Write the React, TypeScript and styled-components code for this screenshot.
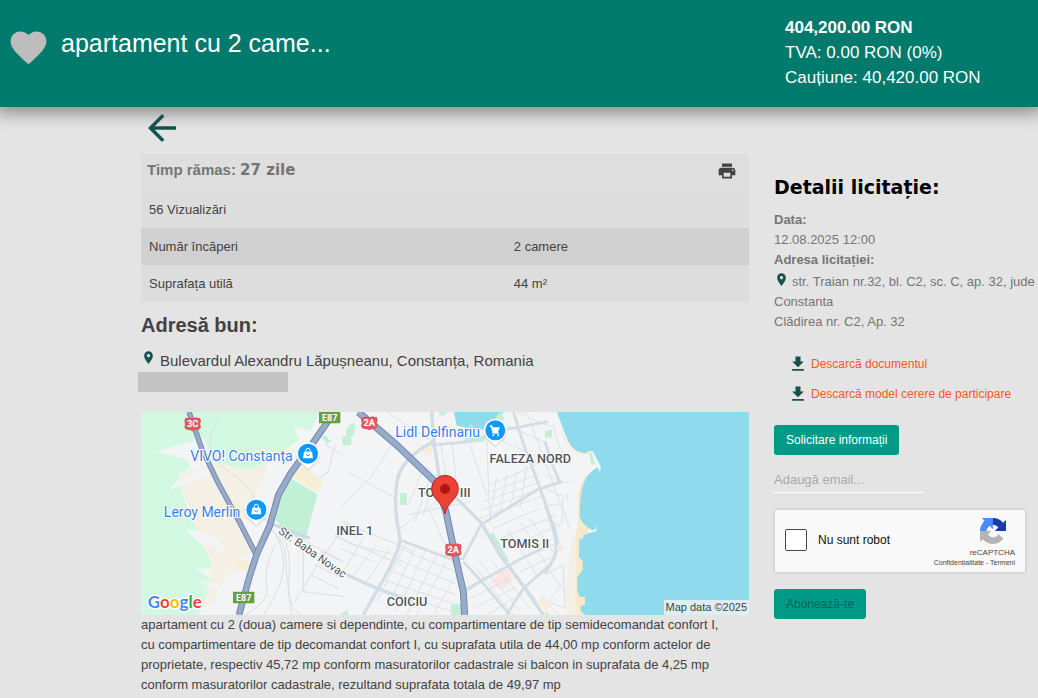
import React from "react";
import styled, { createGlobalStyle } from "styled-components";

const teal = "#007a6c";
const darkTeal = "#14524c";

const GlobalStyle = createGlobalStyle`
  *, *::before, *::after { box-sizing: border-box; }
  html, body { margin: 0; background: #e4e4e4; overflow-x: hidden; }
  body { font-family: "Liberation Sans", Arial, sans-serif; font-size: 13px; color: #424242; overflow-y: hidden; }
  h1, h2, p { margin: 0; }
  button, input { font-family: inherit; }
`;

const Header = styled.header`
  display: grid;
  grid-template-columns: minmax(0, 1fr) 253px;
  height: 107px;
  background: ${teal};
  color: #fff;
  box-shadow: 0 2px 16px 4px rgba(0, 0, 0, 0.4);
`;

const TitleGroup = styled.div`
  display: flex;
  align-items: flex-start;
  gap: 11px;
  padding: 26px 0 0 7px;
`;

const IconButton = styled.button<{ $color: string }>`
  display: flex;
  padding: 0;
  border: 0;
  background: none;
  color: ${(p) => p.$color};
  cursor: pointer;
`;

const Title = styled.h1`
  font-size: 25px;
  font-weight: 400;
  line-height: 34px;
  white-space: nowrap;
`;

const Prices = styled.div`
  padding-top: 15px;
  font-size: 17px;
  line-height: 25px;
`;

const Content = styled.main`
  display: grid;
  grid-template-columns: minmax(0, 1fr) 264px;
  gap: 25px;
  padding-left: 141px;
`;

const BackLink = styled.a`
  display: flex;
  align-items: flex-start;
  width: 42px;
  height: 47px;
  color: ${darkTeal};
`;

const SummaryBar = styled.div`
  display: flex;
  justify-content: space-between;
  align-items: flex-start;
  height: 37px;
  padding: 7px 12px 0 6px;
  background: #dedede;
  color: #757575;
  font-size: 15px;
  font-weight: 700;
  line-height: 18px;
`;

const Heavy = styled.span`
  font-family: "DejaVu Sans", "Liberation Sans", sans-serif;
`;

const Facts = styled.table`
  width: 100%;
  border-collapse: collapse;
  table-layout: fixed;
  background: #dddddd;

  tr:nth-child(2) { background: #d0d0d0; }
  th, td {
    height: 37px;
    padding: 0 8px;
    font-weight: 400;
    text-align: left;
  }
  th { width: 60%; }
`;

const SectionTitle = styled.h2`
  padding-top: 10px;
  font-size: 20px;
  line-height: 26px;
`;

const Address = styled.p`
  display: flex;
  gap: 4px;
  padding-top: 12px;
  font-size: 15px;
  line-height: 22px;
`;

const Placeholder = styled.div`
  width: 150px;
  height: 20px;
  margin: 0 0 20px -3px;
  background: #c3c3c3;
`;

const MapSvg = styled.svg`
  display: block;
  width: 100%;
  height: auto;
  font-family: Roboto, sans-serif;
`;

const Description = styled.p`
  padding-right: 20px;
  line-height: 20px;
`;

const Sidebar = styled.aside`
  padding-top: 67px;
  color: #757575;
`;

const SidebarTitle = styled.h2`
  padding-bottom: 10px;
  color: #000;
  font-family: "DejaVu Sans", "Liberation Sans", sans-serif;
  font-size: 19px;
  font-weight: 700;
  line-height: 26px;
`;

const Line = styled.p`
  line-height: 20px;
  white-space: nowrap;
`;

const PinLine = styled(Line)`
  display: flex;
  gap: 3px;
  padding-top: 2px;
`;

const Downloads = styled.div`
  display: flex;
  flex-direction: column;
  gap: 10px;
  padding: 22px 0 21px 14px;
`;

const DownloadLink = styled.a`
  display: flex;
  align-items: center;
  gap: 3px;
  height: 20px;
  color: #ff5722;
  font-size: 12px;
  text-decoration: none;
  white-space: nowrap;

  svg { color: ${darkTeal}; }
`;

const Button = styled.button`
  display: block;
  height: 30px;
  padding: 0 12px;
  border: 0;
  border-radius: 3px;
  background: #009a89;
  color: #fff;
  font-size: 12px;
  cursor: pointer;

  &:disabled { color: #00665c; cursor: default; }
`;

const EmailInput = styled.input`
  display: block;
  width: 150px;
  height: 26px;
  margin: 12px 0 16px;
  padding: 0;
  border: 0;
  border-bottom: 1px solid #fff;
  background: none;
  font-size: 13px;
  outline: 0;

  &::placeholder { color: #a9a9a9; opacity: 1; }
`;

const Captcha = styled.div`
  display: flex;
  justify-content: space-between;
  width: 252px;
  height: 64px;
  margin-bottom: 16px;
  padding: 0 10px;
  border: 1px solid #d3d3d3;
  border-radius: 2px;
  background: #f9f9f9;
  color: #111;
  box-shadow: 0 0 3px rgba(0, 0, 0, 0.1);
`;

const CaptchaLabel = styled.label`
  display: flex;
  align-items: center;
  gap: 11px;
  height: 60px;
  font-size: 12px;
  white-space: nowrap;
`;

const CaptchaBox = styled.input`
  appearance: none;
  width: 22px;
  height: 22px;
  margin: 0;
  border: 1px solid #444;
  border-radius: 2px;
  background: #fff;
`;

const CaptchaBrand = styled.div`
  display: flex;
  flex-direction: column;
  align-items: flex-end;
  padding-top: 8px;
  color: #444;
  font-size: 8px;
  line-height: 10px;

  svg { margin: 0 9px 4px 0; }
`;

const CaptchaTerms = styled.div`
  font-size: 7px;
  line-height: 9px;
  white-space: nowrap;
  a { color: inherit; text-decoration: none; }
`;

const PinWrap = styled.span`
  display: flex;
  color: ${darkTeal};
`;

const paths = {
  heart:
    "M12 21.35l-1.45-1.32C5.4 15.36 2 12.28 2 8.5 2 5.42 4.42 3 7.5 3c1.74 0 3.41.81 4.5 2.09C13.09 3.81 14.76 3 16.5 3 19.58 3 22 5.42 22 8.5c0 3.78-3.4 6.86-8.55 11.54L12 21.35z",
  back: "M20 11H7.83l5.59-5.59L12 4l-8 8 8 8 1.41-1.41L7.83 13H20v-2z",
  print:
    "M19 8H5c-1.66 0-3 1.34-3 3v6h4v4h12v-4h4v-6c0-1.66-1.34-3-3-3zm-3 11H8v-5h8v5zm3-7c-.55 0-1-.45-1-1s.45-1 1-1 1 .45 1 1-.45 1-1 1zm-1-9H6v4h12V3z",
  place:
    "M12 2C8.13 2 5 5.13 5 9c0 5.25 7 13 7 13s7-7.75 7-13c0-3.87-3.13-7-7-7zm0 9.5c-1.38 0-2.5-1.12-2.5-2.5s1.12-2.5 2.5-2.5 2.5 1.12 2.5 2.5-1.12 2.5-2.5 2.5z",
  download: "M19 9h-4V3H9v6H5l7 7 7-7zM5 18v2h14v-2H5z",
};

function Icon({ name, size }: { name: keyof typeof paths; size: number }) {
  return (
    <svg width={size} height={size} viewBox="0 0 24 24" fill="currentColor" aria-hidden="true">
      <path d={paths[name]} />
    </svg>
  );
}

function Pin() {
  return (
    <PinWrap>
      <Icon name="place" size={15} />
    </PinWrap>
  );
}

function RecaptchaLogo() {
  return (
    <svg width="26" height="26" viewBox="0 0 64 64" aria-hidden="true">
      <path fill="#1c3aa9" d="M64 31.955l-.033-1.37V4.687l-7.16 7.16C50.948 4.674 42.033.093 32.05.093c-10.4 0-19.622 4.96-25.458 12.64l11.736 11.86a15.55 15.55 0 0 1 4.754-5.334c2.05-1.6 4.952-2.906 8.968-2.906.485 0 .86.057 1.135.163 4.976.393 9.288 3.14 11.828 7.124l-8.307 8.307L64 31.953" />
      <path fill="#4b8df8" d="M31.862.094l-1.37.033H4.594l7.16 7.16C4.58 13.147 0 22.06 0 32.046c0 10.4 4.96 19.622 12.64 25.458L24.5 45.768a15.55 15.55 0 0 1-5.334-4.754c-1.6-2.05-2.906-4.952-2.906-8.968 0-.485.057-.86.163-1.135.393-4.976 3.14-9.288 7.124-11.828l8.307 8.307L31.86.095" />
      <path fill="#b4b4b4" d="M.001 32.045l.033 1.37v25.898l7.16-7.16c5.86 7.173 14.774 11.754 24.76 11.754 10.4 0 19.622-4.96 25.458-12.64l-11.736-11.86a15.55 15.55 0 0 1-4.754 5.334c-2.05 1.6-4.952 2.906-8.968 2.906-.485 0-.86-.057-1.135-.163-4.976-.393-9.288-3.14-11.828-7.124l8.307-8.307c-10.522.04-22.4.066-27.295-.005" />
    </svg>
  );
}

function Highway({ d, w }: { d: string; w: number }) {
  return (
    <g fill="none" strokeLinejoin="round">
      <path d={d} stroke="#7189b2" strokeWidth={w} />
      <path d={d} stroke="#98abc9" strokeWidth={w - 6} />
    </g>
  );
}

function Shield({ x, y, label }: { x: number; y: number; label: string }) {
  return (
    <g transform={`translate(${x} ${y})`}>
      <path d="M-22-19q6 3 11-1 11 4 22 0 5 4 11 1l3 10q-5 9 0 18-3 10-14 9-6 1-11 4-5-3-11-4-11 1-14-9 5-9 0-18z" fill="#dd5a62" />
      <text y="9" textAnchor="middle" fontSize="28" fontWeight="700" fill="#fff">{label}</text>
    </g>
  );
}

function EuroBadge({ x, y }: { x: number; y: number }) {
  return (
    <g transform={`translate(${x} ${y})`}>
      <rect x="-32" y="-18" width="64" height="35" rx="2" fill="#689f3f" />
      <text y="9" textAnchor="middle" fontSize="27" fontWeight="700" fill="#fff">E87</text>
    </g>
  );
}

function ShopPin({ x, y, cart }: { x: number; y: number; cart?: boolean }) {
  return (
    <g transform={`translate(${x} ${y})`}>
      <path d="M-36 0a36 36 0 1 1 72 0c0 17-10 26-20 33L0 48l-16-15C-26 26-36 17-36 0z" fill="#9aa8b5" opacity=".35" transform="translate(0 3)" />
      <path d="M-35 0a35 35 0 1 1 70 0c0 17-10 25-20 32L0 46l-15-14C-25 25-35 17-35 0z" fill="#fff" />
      <circle r="30" fill="#0b99fb" />
      {cart ? (
        <g fill="#fff">
          <path d="M-17-15h7l3 6h21l-7 16H-8L-14-11h-3z" />
          <path d="M-9 6h20v4H-9z" />
          <circle cx="-6" cy="15" r="3" />
          <circle cx="8" cy="15" r="3" />
        </g>
      ) : (
        <g>
          <path d="M-12-6h24l3 20h-30z" fill="#fff" />
          <path d="M-6-5v-5q0-6 6-6t6 6v5" fill="none" stroke="#fff" strokeWidth="3" />
          <path d="M-6 2q6 9 12 0" fill="none" stroke="#0b99fb" strokeWidth="3" />
        </g>
      )}
    </g>
  );
}

function LocationMap() {
  return (
    <MapSvg viewBox="0 0 1824 609" role="img" aria-label="Harta">
      <rect width="1824" height="609" fill="#f3f4f5" />

      {/* western parks, retail zones and streets */}
      <g transform="translate(-18 -21)">
        <path fill="#d3f8e2" d="M18 21H553L528 78 475 64 492 105 455 130 400 170 340 195 240 172 205 100 65 140 150 160 165 185 100 255 135 240 165 330 190 378 150 372 205 425 230 465 228 492 180 490 228 520 220 550 195 528 222 560 190 630H18z" />
        <path fill="#f5f0e5" d="M130 205 240 175 340 195 400 170 385 230 350 290 325 350 340 400 350 440 300 475 340 490 275 510 235 600 205 610 190 630 225 550 228 470 190 378 150 270z" />
        <path fill="#f3f4f5" d="M65 140 200 100 225 175 180 160zM100 255 200 188 240 205zM150 372 250 398 268 448zM180 495 250 500 290 515 240 500zM192 527 240 535 275 550 268 560z" />
        <path fill="#f8edd5" d="M480 185 515 190 563 230 550 262 470 215zM295 475 310 462 350 475 335 497z" />
        <path fill="#c2f0d5" d="M464 218 548 268 510 405 462 390 422 345 430 280z" />
        <path fill="#c2f0d5" d="M560 98l10-8 17 17-10 9zM622 94h27v27h-27zM633 76q12-26 28-19l-4 34q-14 8-24 0zM614 630l25-17v17z" />
        <g fill="none" stroke="#d8dfe6" strokeWidth="3">
          <path d="M262 21Q222 80 224 120T270 190T340 250T350 280M350 320L420 360L625 470M600 120L580 200L556 218M570 118L622 150" />
          <path d="M400 370Q450 400 452 460T470 630M410 375Q440 400 445 470T385 630M440 390Q470 430 462 520T500 630M420 420Q385 490 395 540T330 630M505 440V560L630 575M480 590L540 490L640 350M530 510L610 550M540 480L625 520M560 440L625 470M595 390L800 480M620 350L840 440" />
          <path d="M405 355L525 400" stroke="#cbd6df" strokeWidth="8" />
        </g>
        <Highway d="M162 21 200 130 250 235 310 345 363 448" w={16} />
        <Highway d="M598 21 540 105 465 208 430 270 405 360 365 448 342 520 312 630" w={20} />
      </g>

      {/* centre and residential grid */}
      <g transform="translate(597 -21)">
        <path fill="#90daee" d="M342 21H490L470 55 445 75 400 72 350 62z" />
        <path fill="#c2f0d5" d="M466 35l18-14 9 20-18 22zM180 264h21v36h-21zM445 390l15-8 47 85-13 10zM333 598h32v32h-32zM297 21h24q-5 15-24 9zM612 80l22-8v28zM390 92h49l-8 18-75 6z" />
        <path fill="#f8edd5" d="M247 135l23-14 8 24-16 10zM590 590l20-12 20 22-10 22z" />
        <path fill="#fce4e3" d="M450 530l23-16-2-16 25-13 26 36-38 35z" />
        <g fill="none" stroke="#dbe2e8" strokeWidth="3">
          <path d="M0 310 90 220 155 120M20 200 170 280M60 21Q130 80 200 135M140 21 280 110M180 370 340 250M200 330 390 290M205 300 250 190M225 350 275 200M250 330 285 210M265 310 330 450M300 110 320 220M335 110 350 240M390 120 440 270M440 100 450 350" />
          <path d="M0 430 100 470M0 400 40 420 170 450M10 500 70 400M40 510 110 420M80 530 150 430M180 430 345 500M165 460 345 535M145 495 350 570M130 525 355 600M115 550 365 628M200 410 110 590M230 420 140 610M260 430 170 620M290 450 200 630M320 470 230 630M345 515 280 630" />
          <path d="M450 240 590 180M440 265 600 205M430 290 605 230M425 315 610 250M420 340 615 270M470 220 450 340M500 210 480 330M530 195 510 325M560 180 540 310M450 90 590 155M500 60 620 115M530 21 620 60M560 21 700 400" />
          <path d="M460 370 600 310M480 400 650 330M500 430 660 360M520 470 660 410M540 500 650 450M380 560 490 490M390 580 510 520M400 610 520 550M440 630 540 570M400 480 520 630M420 470 540 620M450 460 570 610M480 440 590 590M500 370 590 510M540 350 620 480M570 340 645 450M600 570 655 630" />
        </g>
        <g fill="none" stroke="#d2dce4" strokeWidth="10">
          <path d="M275 21 283 120 300 230 425 355 480 450 555 550 610 630M0 500 110 550 215 590M280 110Q180 160 170 235T180 400Q180 440 115 550L70 630" />
          <path d="M280 120 390 110 490 75 625 50M430 355 590 255 660 232M520 21 555 130 600 250 645 375Q665 430 630 480L550 550 500 630M425 355 370 460 340 465 180 405M370 470 425 530 510 630M375 555 555 455 620 425" strokeWidth="8" />
        </g>
        <circle cx="278" cy="118" r="7" fill="#d2dce4" />
        <Highway d="M55 21 170 120 290 235 318 320 345 450 370 560 374 630" w={21} />
      </g>

      {/* coast and sea */}
      <g transform="translate(1212 -21)">
        <g fill="none" stroke="#dbe2e8" strokeWidth="3">
          <path d="M0 60 25 65 45 130 75 180 84 215 65 235 0 210M0 250 55 275 50 360 0 345M0 300H52M65 262V280L88 300V275M0 480 60 560M0 510 55 480 60 610 10 590 55 530" />
        </g>
        <path d="M0 300Q20 350 31 400T0 505M0 245 45 232 22 180 0 110" fill="none" stroke="#d2dce4" strokeWidth="8" />
        <path fill="#f5f0e5" d="M100 350 115 390 110 630H60Q62 560 70 490L80 400z" />
        <path fill="#f8e9cc" d="M30 21 60 110 90 145 125 147 100 215 97 370 90 400 95 500 90 545 95 630H130V21z" />
        <path fill="#f3f4f5" d="M27 21 67 115 95 145 125 148 150 140 157 183 120 215 98 265 97 350 92 400 75 400V21z" />
        <path fill="#90daee" d="M36 21 50 60 70 110Q90 143 120 144L138 137 165 185V201L158 186Q128 203 116 235T104 335Q112 360 143 376L151 372 154 357V378L115 390V400L103 402 102 455 113 470V495L97 515V555L103 575 120 577V600L106 604 108 618 120 630H612V21z" />
        <path fill="#f3f4f5" d="M138 137l7 4 22 44-1 16-8-15-12-2z" />
        <path fill="#c2f0d5" d="M132 145 141 142 150 178 139 180zM0 80 18 73 22 95 0 100zM0 618 16 630H0z" />
        <path fill="#fce4e3" d="M33 425 50 418 53 434 37 442z" />
      </g>

      <g fontSize="42" fill="#367ee9" stroke="#fff" strokeWidth="6" paintOrder="stroke" textAnchor="end">
        <text x="455" y="146">VIVO! Constanța</text>
        <text x="298" y="314">Leroy Merlin</text>
        <text x="1017" y="76">Lidl Delfinariu</text>
      </g>
      <g fontSize="38" fontWeight="500" fill="#505459" stroke="#fff" strokeWidth="6" paintOrder="stroke" textAnchor="middle">
        <text x="1168" y="153">FALEZA NORD</text>
        <text x="910" y="256">TOMIS III</text>
        <text x="641" y="370">INEL 1</text>
        <text x="1151" y="409">TOMIS II</text>
        <text x="798" y="583">COICIU</text>
      </g>
      <text transform="translate(410 362) rotate(35)" fontSize="34" fill="#505459" stroke="#fff" strokeWidth="6" paintOrder="stroke">Str. Baba Novac</text>

      <Shield x={155} y={36} label="3C" />
      <Shield x={685} y={33} label="2A" />
      <Shield x={937} y={414} label="2A" />
      <EuroBadge x={566} y={17} />
      <EuroBadge x={308} y={557} />
      <ShopPin x={501} y={125} />
      <ShopPin x={346} y={293} />
      <ShopPin x={1063} y={55} cart />

      <path d="M912 306C906 270 872 262 872 230a40 40 0 0 1 80 0c0 32-34 40-40 76z" fill="#ea4335" stroke="#c5221f" strokeWidth="3" />
      <circle cx="912" cy="231" r="15" fill="#b31412" />

      <text x="20" y="588" fontFamily="Lato, sans-serif" fontSize="51" fontWeight="700" stroke="#fff" strokeWidth="8" paintOrder="stroke">
        <tspan fill="#4285f4">G</tspan>
        <tspan fill="#ea4335">o</tspan>
        <tspan fill="#fbbc04">o</tspan>
        <tspan fill="#4285f4">g</tspan>
        <tspan fill="#34a853">l</tspan>
        <tspan fill="#ea4335">e</tspan>
      </text>
      <rect x="1569" y="564" width="255" height="45" fill="#f5f5f5" opacity=".75" />
      <text x="1818" y="596" textAnchor="end" fontFamily="Liberation Sans, sans-serif" fontSize="33" fill="#444">Map data ©2025</text>
    </MapSvg>
  );
}

export default function App() {
  return (
    <>
      <GlobalStyle />
      <Header>
        <TitleGroup>
          <IconButton $color="#bdbdbd" aria-label="Favorit">
            <Icon name="heart" size={43} />
          </IconButton>
          <Title>apartament cu 2 came...</Title>
        </TitleGroup>
        <Prices>
          <strong>404,200.00 RON</strong>
          <p>TVA: 0.00 RON (0%)</p>
          <p>Cauțiune: 40,420.00 RON</p>
        </Prices>
      </Header>

      <Content>
        <section>
          <BackLink href="#" aria-label="Înapoi">
            <Icon name="back" size={42} />
          </BackLink>
          <SummaryBar>
            <span>
              Timp rămas: <Heavy>27 zile</Heavy>
            </span>
            <IconButton $color="#424242" aria-label="Printează">
              <Icon name="print" size={20} />
            </IconButton>
          </SummaryBar>
          <Facts>
            <tbody>
              <tr>
                <th scope="row">56 Vizualizări</th>
                <td />
              </tr>
              <tr>
                <th scope="row">Număr încăperi</th>
                <td>2 camere</td>
              </tr>
              <tr>
                <th scope="row">Suprafața utilă</th>
                <td>44 m²</td>
              </tr>
            </tbody>
          </Facts>
          <SectionTitle>Adresă bun:</SectionTitle>
          <Address>
            <Pin />
            Bulevardul Alexandru Lăpușneanu, Constanța, Romania
          </Address>
          <Placeholder />
          <LocationMap />
          <Description>
            apartament cu 2 (doua) camere si dependinte, cu compartimentare de tip semidecomandat confort I,
            cu compartimentare de tip decomandat confort I, cu suprafata utila de 44,00 mp conform actelor de
            proprietate, respectiv 45,72 mp conform masuratorilor cadastrale si balcon in suprafata de 4,25 mp
            conform masuratorilor cadastrale, rezultand suprafata totala de 49,97 mp
          </Description>
        </section>

        <Sidebar>
          <SidebarTitle>Detalii licitație:</SidebarTitle>
          <Line>
            <strong>Data:</strong>
          </Line>
          <Line>12.08.2025 12:00</Line>
          <Line>
            <strong>Adresa licitației:</strong>
          </Line>
          <PinLine>
            <Pin />
            str. Traian nr.32, bl. C2, sc. C, ap. 32, jude
          </PinLine>
          <Line>Constanta</Line>
          <Line>Clădirea nr. C2, Ap. 32</Line>
          <Downloads>
            <DownloadLink href="#">
              <Icon name="download" size={20} />
              Descarcă documentul
            </DownloadLink>
            <DownloadLink href="#">
              <Icon name="download" size={20} />
              Descarcă model cerere de participare
            </DownloadLink>
          </Downloads>
          <Button type="button">Solicitare informații</Button>
          <EmailInput type="email" placeholder="Adaugă email..." aria-label="Adaugă email" />
          <Captcha>
            <CaptchaLabel>
              <CaptchaBox type="checkbox" />
              Nu sunt robot
            </CaptchaLabel>
            <CaptchaBrand>
              <RecaptchaLogo />
              reCAPTCHA
              <CaptchaTerms>
                <a href="#">Confidențialitate</a> - <a href="#">Termeni</a>
              </CaptchaTerms>
            </CaptchaBrand>
          </Captcha>
          <Button type="button" disabled>
            Abonează-te
          </Button>
        </Sidebar>
      </Content>
    </>
  );
}
